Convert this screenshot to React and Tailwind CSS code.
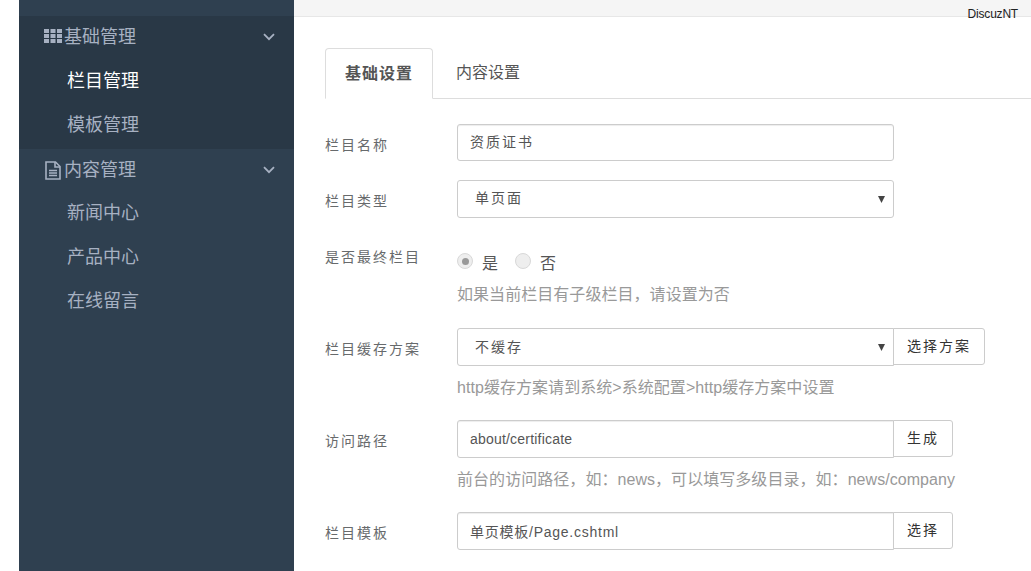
const cjk = "font-['Liberation_Sans','Noto_Sans_CJK_SC',sans-serif]";

function Chevron() {
  return (
    <svg width="12" height="8" viewBox="0 0 12 8" fill="none" stroke="#a7b1c2" strokeWidth="1.8">
      <path d="M1 1.2l5 5 5-5" />
    </svg>
  );
}

function GridIcon() {
  return (
    <svg className="-mt-[2px]" width="18" height="14" viewBox="0 0 18 14" fill="#a7b1c2">
      {[0, 5, 10].map((y) =>
        [0, 6.5, 13].map((x) => <rect key={`${x}-${y}`} x={x} y={y} width="5" height="4" />)
      )}
    </svg>
  );
}

function FileIcon() {
  return (
    <svg width="18" height="19" viewBox="0 0 18 19" fill="none" stroke="#a7b1c2" strokeWidth="1.6">
      <path d="M2 1h9.500l4.500 4.500v12.500h-14z" />
      <path d="M11 1v5h5M5 9.500h8M5 12h8M5 14.500h8" />
    </svg>
  );
}

function MenuGroup({ icon, title }) {
  return (
    <div className="h-[44px] pb-[2px] flex items-center pl-[25px] pr-[19px] text-[18px] text-[#a7b1c2]">
      <span className="w-[20px] flex">{icon}</span>
      <span className="flex-1">{title}</span>
      <Chevron />
    </div>
  );
}

function MenuItem({ active, children }) {
  return (
    <div className={`h-[44px] pb-[2px] flex items-center pl-[48px] text-[18px] ${active ? 'text-white' : 'text-[#a7b1c2]'}`}>
      {children}
    </div>
  );
}

function Row({ label, labelTop = 'pt-[11px]', children, className = '' }) {
  return (
    <div className={`flex items-start ${className}`}>
      <label className={`w-[132px] text-[14px] leading-[20px] tracking-[2px] text-[#676a6c] ${labelTop}`}>{label}</label>
      {children}
    </div>
  );
}

function TextBox({ value, grouped, spacing }) {
  return (
    <input
      readOnly
      value={value}
      className={`w-[437px] px-[12px] text-[14px] text-[#555] bg-white border border-[#ccc] shadow-[inset_0_1px_1px_rgba(0,0,0,0.075)] outline-none ${spacing} ${cjk} ${grouped ? 'h-[38px] rounded-l-[3px]' : 'h-[37px] pb-[4px] rounded-[3px]'}`}
    />
  );
}

function SelectBox({ value, grouped }) {
  return (
    <div className="relative w-[437px] h-[38px]">
      <select
        defaultValue={value}
        className={`w-full h-full appearance-none pl-[17px] text-[14px] tracking-[2px] text-[#555] bg-white border border-[#ccc] outline-none ${cjk} ${grouped ? 'rounded-l-[3px]' : 'pb-[2px] rounded-[3px]'}`}
      >
        <option>{value}</option>
      </select>
      <svg className="absolute right-[9px] top-[16px]" width="7" height="7" viewBox="0 0 7 7" fill="#444">
        <path d="M0 0h7L3.500 7z" />
      </svg>
    </div>
  );
}

function AddonButton({ children }) {
  return (
    <button className="h-[37px] -ml-px pl-[13px] pr-[13px] text-[14px] tracking-[2px] text-[#333] bg-white border border-[#ccc] rounded-r-[3px]">
      {children}
    </button>
  );
}

function Radio({ checked }) {
  return (
    <span className="w-[16px] h-[16px] rounded-full border border-[#d8d8d8] bg-[#eee] flex items-center justify-center">
      {checked && <span className="w-[7px] h-[7px] rounded-full bg-[#999]" />}
    </span>
  );
}

function Help({ children }) {
  return <p className="mt-[11px] pl-[132px] text-[16px] leading-[22px] tracking-[0.05px] text-[#999]">{children}</p>;
}

export default function App() {
  return (
    <div className={`h-screen overflow-hidden flex bg-white ${cjk}`}>
      <div className="w-[19px] shrink-0" />

      <aside className="w-[275px] shrink-0 bg-[#2f4050] pt-[16px]">
        <div className="bg-[#293846] h-[133px]">
          <MenuGroup icon={<GridIcon />} title="基础管理" />
          <MenuItem active>栏目管理</MenuItem>
          <MenuItem>模板管理</MenuItem>
        </div>
        <MenuGroup icon={<FileIcon />} title="内容管理" />
        <div className="-mt-px">
          <MenuItem>新闻中心</MenuItem>
          <MenuItem>产品中心</MenuItem>
          <MenuItem>在线留言</MenuItem>
        </div>
      </aside>

      <main className="flex-1 min-w-0">
        <div className="relative h-[17px] bg-[#f5f5f5] border-b border-[#e7e7e7]">
          <span className="absolute right-[13px] top-[7px] text-[12px] leading-[14px] tracking-[-0.2px] text-[#222]">DiscuzNT</span>
        </div>

        <div className="pl-[31px] pt-[31px]">
          <div className="flex h-[51px] border-b border-[#ddd]">
            <div className="w-[108px] h-[51px] flex items-center justify-center text-[16px] font-bold tracking-[1px] text-[#555] bg-white border border-[#ddd] border-b-white rounded-t-[4px]">
              基础设置
            </div>
            <div className="w-[110px] flex items-center justify-center text-[16px] text-[#555]">内容设置</div>
          </div>

          <Row label="栏目名称" className="mt-[25px]">
            <TextBox value="资质证书" spacing="tracking-[2px]" />
          </Row>
          <Row label="栏目类型" className="mt-[19px]">
            <SelectBox value="单页面" />
          </Row>
          <Row label="是否最终栏目" labelTop="pt-[3px]" className="mt-[26px]">
            <div className="flex items-start h-[29px] pt-[9px] text-[16px] leading-[24px] text-[#555]">
              <Radio checked />
              <span className="-mt-[1px] ml-[9px] mr-[17px]">是</span>
              <Radio />
              <span className="-mt-[1px] ml-[9px]">否</span>
            </div>
          </Row>
          <Help>如果当前栏目有子级栏目，请设置为否</Help>
          <Row label="栏目缓存方案" className="mt-[22px]">
            <SelectBox value="不缓存" grouped />
            <AddonButton>选择方案</AddonButton>
          </Row>
          <Help>http缓存方案请到系统&gt;系统配置&gt;http缓存方案中设置</Help>
          <Row label="访问路径" className="mt-[21px]">
            <TextBox value="about/certificate" spacing="tracking-[0.2px]" grouped />
            <AddonButton>生成</AddonButton>
          </Row>
          <Help>前台的访问路径，如：news，可以填写多级目录，如：news/company</Help>
          <Row label="栏目模板" className="mt-[21px]">
            <TextBox value="单页模板/Page.cshtml" spacing="tracking-[0.75px]" grouped />
            <AddonButton>选择</AddonButton>
          </Row>
        </div>
      </main>
    </div>
  );
}
